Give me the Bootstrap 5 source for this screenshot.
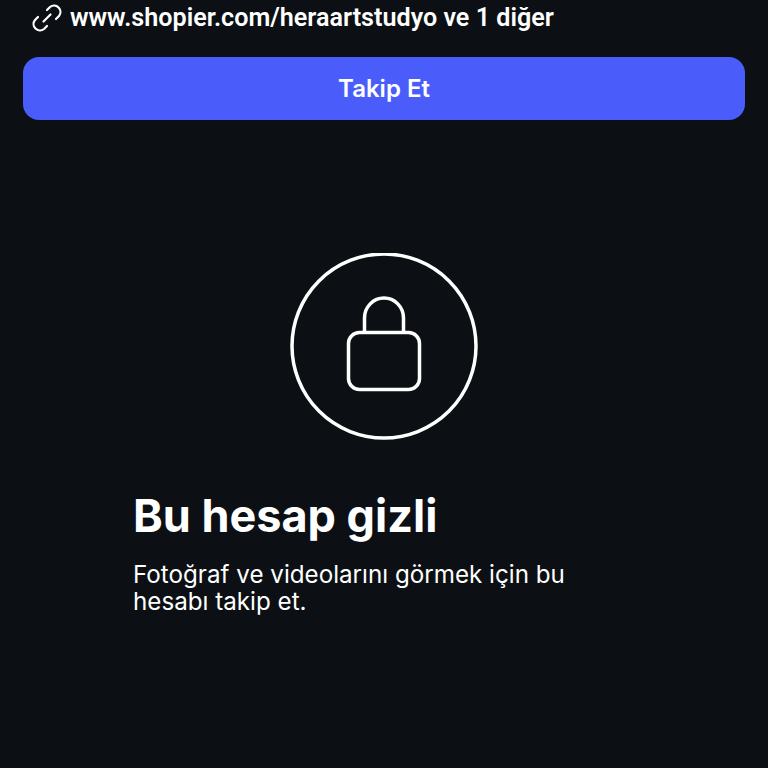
<!DOCTYPE html>
<html>
<head>
    <title>Bu hesap gizli</title>
    <meta name="viewport" content="width=device-width, initial-scale=1">
    <link href="https://cdn.jsdelivr.net/npm/bootstrap@5.3.3/dist/css/bootstrap.min.css" rel="stylesheet">
    <style>
        html, body {
            height: 768px;
            overflow: hidden;
        }
        body {
            background-color: #0c1014;
            color: #fff;
            font-family: "Inter", "Liberation Sans", sans-serif;
        }
        .profile-link {
            height: 38px;
            padding-left: 32px;
            padding-bottom: 2px;
            gap: 8px;
            font-family: "Roboto", "Liberation Sans", sans-serif;
            font-size: 25.15px;
            font-weight: 600;
            line-height: 1;
            margin-bottom: 19px;
        }
        .follow-btn {
            height: 63px;
            margin: 0 23px;
            width: 722px;
            background-color: #4a5dfb;
            border: 0;
            border-radius: 16px;
            color: #fff;
            font-size: 24px;
            font-weight: 600;
        }
        .follow-btn:hover {
            background-color: #4a5dfb;
            color: #fff;
        }
        .lock-wrap {
            margin-top: 133px;
        }
        .private-text {
            margin-top: 45px;
            padding: 0 133px;
        }
        .private-title {
            font-size: 45px;
            font-weight: 700;
            line-height: 60px;
            margin: 0 0 15px;
        }
        .private-sub {
            font-size: 24.2px;
            line-height: 27px;
            margin: 0;
        }
    </style>
</head>
<body>
    <div class="profile-link d-flex align-items-center">
        <svg width="30" height="30" viewBox="0 0 30 30" fill="none" stroke="#fff" stroke-width="2.2" stroke-linecap="round" stroke-linejoin="round">
            <path d="M11.5 18.5l7-7"/>
            <path d="M15 7l3-3a6.4 6.4 0 0 1 9 9l-3 3"/>
            <path d="M15 23l-3 3a6.4 6.4 0 0 1-9-9l3-3"/>
        </svg>
        <span>www.shopier.com/heraartstudyo ve 1 diğer</span>
    </div>

    <button class="btn follow-btn d-block p-0" type="button">Takip Et</button>

    <div class="lock-wrap d-flex justify-content-center">
        <svg width="188" height="188" viewBox="0 0 188 188" fill="none" stroke="#fff">
            <circle cx="94" cy="93" r="92" stroke-width="3.5"/>
            <rect x="58.5" y="79.5" width="71" height="57" rx="11" stroke-width="3.5"/>
            <path d="M74.5 79.5V65a19.5 20 0 0 1 39 0v14.5" stroke-width="3.5"/>
        </svg>
    </div>

    <div class="private-text">
        <h1 class="private-title">Bu hesap gizli</h1>
        <p class="private-sub">Fotoğraf ve videolarını görmek için bu hesabı takip et.</p>
    </div>

    <script src="https://cdn.jsdelivr.net/npm/bootstrap@5.3.3/dist/js/bootstrap.bundle.min.js"></script>
</body>
</html>
